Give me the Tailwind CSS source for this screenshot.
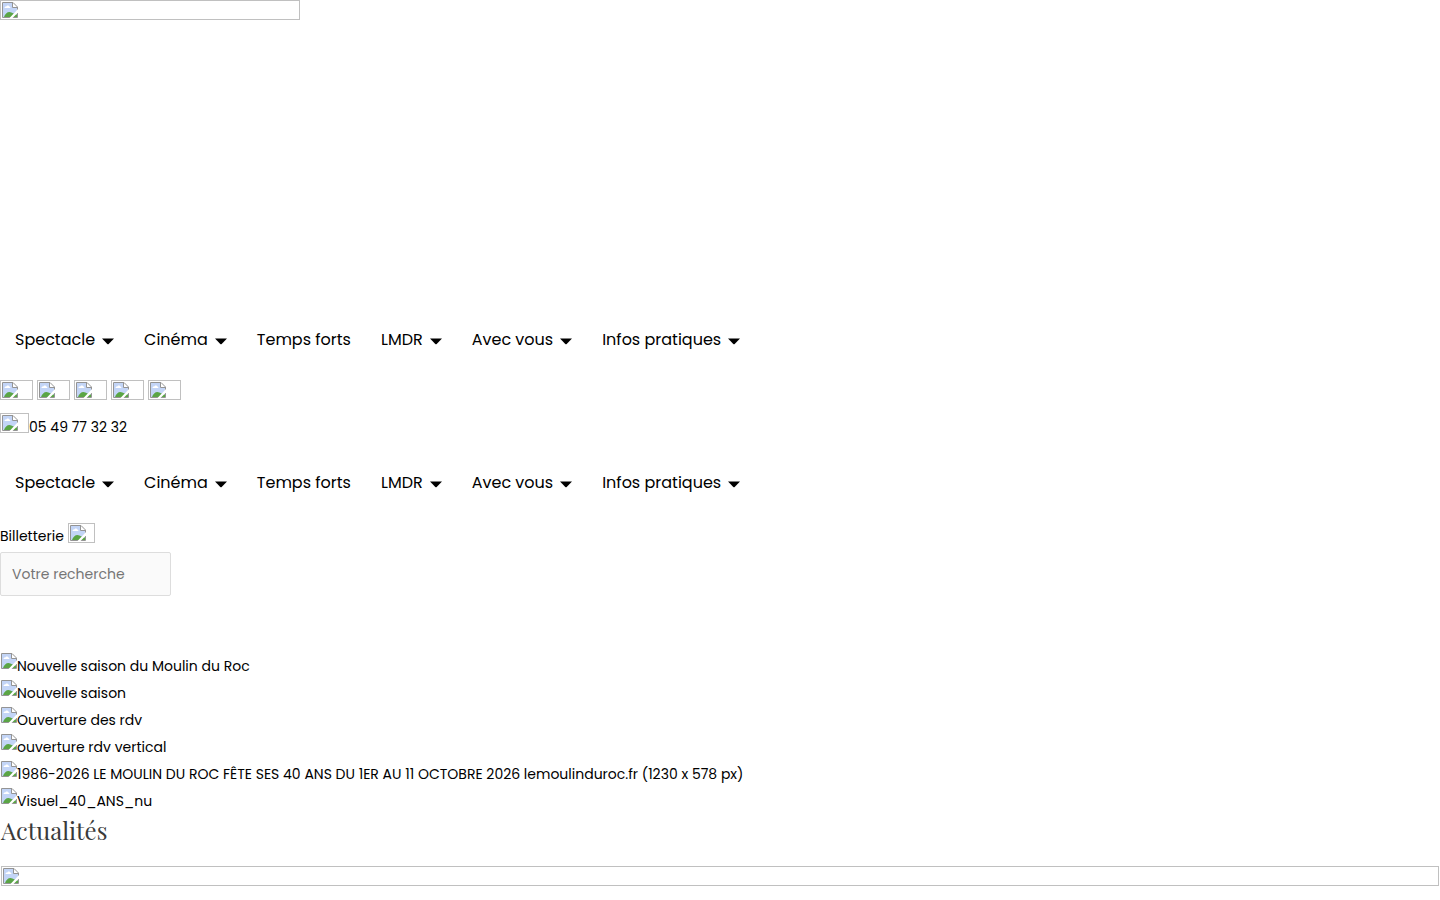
<!DOCTYPE html>
<html lang="fr">
<head>
<meta charset="utf-8">
<meta name="viewport" content="width=device-width, initial-scale=1">
<title>Le Moulin du Roc</title>
<script src="https://cdn.jsdelivr.net/npm/@tailwindcss/browser@4"></script>
</head>
<body class="overflow-x-hidden bg-white font-['Poppins','Inter',sans-serif] text-sm text-black">
<svg class="hidden" aria-hidden="true">
  <symbol id="pic" viewBox="0 0 16 16">
    <path d="M0 0H11L16 5V16H0Z" fill="#fff"/>
    <path d="M1 1H10.500V5.500H15V15H1Z" fill="#c3d5f7"/>
    <path d="M2.500 6C2.500 4.800 3.500 4.500 4.200 4.600C4.700 3 7 3 7.300 4.600C8.500 4.500 8.800 6 8 6Z" fill="#fff"/>
    <path d="M2 15C3 12 5 10 7.500 10C10 10 12 12.500 15 12.500V15Z" fill="#5aa545"/>
    <path d="M.5 .5H11L15.500 5V15.500H.5ZM10.500 .5V5.500H15.500" fill="none" stroke="#949494"/>
    <path d="M16 7V10.500L10.500 16H7.500Z" fill="#fff"/>
  </symbol>
  <symbol id="caret" viewBox="0 0 12 7"><path d="M0 .5H12L6.700 6Q6 6.600 5.300 6Z"/></symbol>
</svg>

<header>
  <a href="#" aria-label="Accueil" class="flex h-5 w-[300px] border border-[#c0c0c0] p-px"><svg class="size-4"><use href="#pic"/></svg></a>

  <nav aria-label="Navigation principale" class="mt-[295px]">
    <ul class="flex text-base leading-[50px]">
      <li class="px-[15px]"><a href="#" class="flex items-center gap-[7px] whitespace-nowrap">Spectacle <svg class="mt-[3px] h-[7px] w-3"><use href="#caret"/></svg></a></li>
      <li class="px-[15px]"><a href="#" class="flex items-center gap-[7px] whitespace-nowrap">Cinéma <svg class="mt-[3px] h-[7px] w-3"><use href="#caret"/></svg></a></li>
      <li class="px-[15px]"><a href="#" class="whitespace-nowrap">Temps forts</a></li>
      <li class="px-[15px]"><a href="#" class="flex items-center gap-[7px] whitespace-nowrap">LMDR <svg class="mt-[3px] h-[7px] w-3"><use href="#caret"/></svg></a></li>
      <li class="px-[15px]"><a href="#" class="flex items-center gap-[7px] whitespace-nowrap">Avec vous <svg class="mt-[3px] h-[7px] w-3"><use href="#caret"/></svg></a></li>
      <li class="px-[15px]"><a href="#" class="flex items-center gap-[7px] whitespace-nowrap">Infos pratiques <svg class="mt-[3px] h-[7px] w-3"><use href="#caret"/></svg></a></li>
    </ul>
  </nav>

  <div class="mt-[15px] flex gap-1">
    <a href="#" aria-label="Facebook" class="flex h-5 w-[33px] border border-[#c0c0c0] p-px"><svg class="size-4"><use href="#pic"/></svg></a>
    <a href="#" aria-label="Instagram" class="flex h-5 w-[33px] border border-[#c0c0c0] p-px"><svg class="size-4"><use href="#pic"/></svg></a>
    <a href="#" aria-label="YouTube" class="flex h-5 w-[33px] border border-[#c0c0c0] p-px"><svg class="size-4"><use href="#pic"/></svg></a>
    <a href="#" aria-label="LinkedIn" class="flex h-5 w-[33px] border border-[#c0c0c0] p-px"><svg class="size-4"><use href="#pic"/></svg></a>
    <a href="#" aria-label="Newsletter" class="flex h-5 w-[33px] border border-[#c0c0c0] p-px"><svg class="size-4"><use href="#pic"/></svg></a>
  </div>

  <a href="#" class="mt-[13px] flex w-fit items-start leading-7"><span class="flex h-5 w-[29px] border border-[#c0c0c0] p-px"><svg class="size-4"><use href="#pic"/></svg></span>05 49 77 32 32</a>

  <nav aria-label="Navigation mobile" class="mt-[17px]">
    <ul class="flex text-base leading-[50px]">
      <li class="px-[15px]"><a href="#" class="flex items-center gap-[7px] whitespace-nowrap">Spectacle <svg class="mt-[3px] h-[7px] w-3"><use href="#caret"/></svg></a></li>
      <li class="px-[15px]"><a href="#" class="flex items-center gap-[7px] whitespace-nowrap">Cinéma <svg class="mt-[3px] h-[7px] w-3"><use href="#caret"/></svg></a></li>
      <li class="px-[15px]"><a href="#" class="whitespace-nowrap">Temps forts</a></li>
      <li class="px-[15px]"><a href="#" class="flex items-center gap-[7px] whitespace-nowrap">LMDR <svg class="mt-[3px] h-[7px] w-3"><use href="#caret"/></svg></a></li>
      <li class="px-[15px]"><a href="#" class="flex items-center gap-[7px] whitespace-nowrap">Avec vous <svg class="mt-[3px] h-[7px] w-3"><use href="#caret"/></svg></a></li>
      <li class="px-[15px]"><a href="#" class="flex items-center gap-[7px] whitespace-nowrap">Infos pratiques <svg class="mt-[3px] h-[7px] w-3"><use href="#caret"/></svg></a></li>
    </ul>
  </nav>

  <a href="#" class="mt-[15px] flex w-fit items-start gap-1 leading-[27px]">Billetterie<span class="flex h-5 w-[27px] border border-[#c0c0c0] p-px"><svg class="size-4"><use href="#pic"/></svg></span></a>

  <form class="mt-[2px]" role="search">
    <input type="search" aria-label="Votre recherche" placeholder="Votre recherche" class="block h-11 w-[171px] rounded-xs border border-[#dddddd] bg-[#fafafa] px-[11px] text-sm placeholder:text-[#757575]">
  </form>
</header>

<main class="mx-px mt-[57px]">
  <ul class="leading-[27px]">
    <li><a href="#" class="flex w-fit"><svg class="size-4 shrink-0"><use href="#pic"/></svg>Nouvelle saison du Moulin du Roc</a></li>
    <li><a href="#" class="flex w-fit"><svg class="size-4 shrink-0"><use href="#pic"/></svg>Nouvelle saison</a></li>
    <li><a href="#" class="flex w-fit"><svg class="size-4 shrink-0"><use href="#pic"/></svg>Ouverture des rdv</a></li>
    <li><a href="#" class="flex w-fit"><svg class="size-4 shrink-0"><use href="#pic"/></svg>ouverture rdv vertical</a></li>
    <li><a href="#" class="flex w-fit"><svg class="size-4 shrink-0"><use href="#pic"/></svg>1986-2026 LE MOULIN DU ROC FÊTE SES 40 ANS DU 1ER AU 11 OCTOBRE 2026 lemoulinduroc.fr (1230 x 578 px)</a></li>
    <li><a href="#" class="flex w-fit"><svg class="size-4 shrink-0"><use href="#pic"/></svg>Visuel_40_ANS_nu</a></li>
  </ul>
  <h2 class="font-['Playfair_Display','Liberation_Serif',serif] text-2xl leading-[30px] text-[#3a3a3a]">Actualités</h2>
  <a href="#" aria-label="Actualité à la une" class="mt-[21px] flex h-5 border border-[#c0c0c0] p-px"><svg class="size-4"><use href="#pic"/></svg></a>
</main>
</body>
</html>
